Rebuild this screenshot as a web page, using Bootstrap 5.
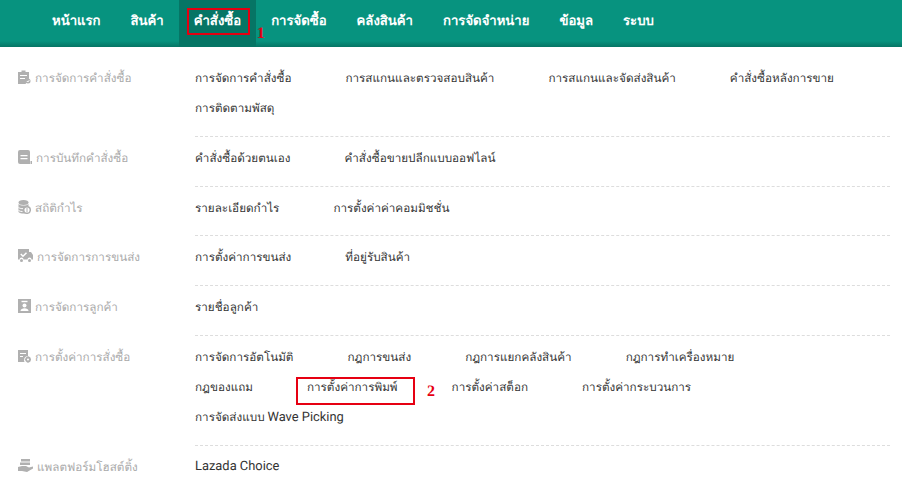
<!DOCTYPE html>
<html lang="th"><head><meta charset="utf-8"><title>คำสั่งซื้อ</title>
<link href="https://cdn.jsdelivr.net/npm/bootstrap@5.3.0/dist/css/bootstrap.min.css" rel="stylesheet">
<style>
html,body{height:496px;overflow:hidden;background:#fff}
body{font-family:Roboto,"Noto Sans",sans-serif;font-size:11.7px;color:#333;text-rendering:geometricPrecision}
.topbar{height:47px;padding-left:37px;background:linear-gradient(#07937f 0,#07937f 41px,#067565 47px)}
.topitem{display:flex;align-items:center;height:47px;padding:0 15px;padding-bottom:3px;color:#fff;font-weight:700;font-size:13.15px;text-decoration:none;position:relative}
.topitem.on{background:#067565}
.markbox{position:absolute;border:2px solid #e60012;pointer-events:none}
.marknum{position:absolute;color:#e60012;font:700 16px "Liberation Serif",serif;line-height:1}
.box1{left:8px;top:8px;width:63px;height:27px}
.num1{left:78px;top:26px}
.menuwrap{padding-top:15.8px;padding-left:18px;padding-right:12px}
.grp{display:flex}
.grplabel{width:177px;flex:none;display:flex;align-items:flex-start;gap:4px;color:#a9a9a9;font-weight:500;height:30px;padding-top:6px;line-height:18px}
.grplabel svg{flex:none;margin-top:1px}
.grplinks{flex:1;display:flex;flex-wrap:wrap;column-gap:54px;padding-bottom:12.3px;border-bottom:1px dashed #ddd;margin-bottom:6px}
.grp:last-child .grplinks{border-bottom:0}
.sublink{color:#333;text-decoration:none;height:30.4px;line-height:18px;padding-top:6px;white-space:nowrap;position:relative}
.latintext{font-size:12.9px}
.rowbreak{flex-basis:100%;height:0}
.box2{left:-11px;top:5px;width:119px;height:28px}
.num2{left:120px;top:12px}
</style></head><body>
<nav class="d-flex topbar">
<a class="topitem" href="#">หน้าแรก</a><a class="topitem" href="#">สินค้า</a>
<a class="topitem on" href="#">คำสั่งซื้อ<span class="markbox box1"></span><span class="marknum num1">1</span></a>
<a class="topitem" href="#">การจัดซื้อ</a><a class="topitem" href="#">คลังสินค้า</a><a class="topitem" href="#">การจัดจำหน่าย</a><a class="topitem" href="#">ข้อมูล</a><a class="topitem" href="#">ระบบ</a>
</nav>
<main class="menuwrap">
<section class="grp"><div class="grplabel"><svg width="13" height="14" viewBox="0 0 13 14"><path fill="#b0b0b0" d="M0 2h3.500V.5h4V2H11v6.500L7.500 14H0z"/><path fill="#fff" d="M2 5h7v1H2zM2 8h5v1H2z"/><circle cx="10" cy="11" r="2.500" fill="#b0b0b0"/><path fill="none" stroke="#fff" d="M8.800 11l1 1 1.500-1.800"/></svg>การจัดการคำสั่งซื้อ</div>
<div class="grplinks"><a class="sublink" href="#">การจัดการคำสั่งซื้อ</a><a class="sublink" href="#">การสแกนและตรวจสอบสินค้า</a><a class="sublink" href="#">การสแกนและจัดส่งสินค้า</a><a class="sublink" href="#">คำสั่งซื้อหลังการขาย</a><a class="sublink" href="#">การติดตามพัสดุ</a></div></section>
<section class="grp"><div class="grplabel"><svg width="14" height="14" viewBox="0 0 14 14"><path fill="#b0b0b0" d="M0 2a2 2 0 0 1 2-2h8a2 2 0 0 1 2 2v12H2a2 2 0 0 1-2-2z"/><path fill="#fff" d="M2.500 5h7v1.200h-7zM2.500 8h7v1.200h-7z"/><path fill="#b0b0b0" d="M12.500 11H14v3h-1.500z"/></svg>การบันทึกคำสั่งซื้อ</div>
<div class="grplinks"><a class="sublink" href="#">คำสั่งซื้อด้วยตนเอง</a><a class="sublink" href="#">คำสั่งซื้อขายปลีกแบบออฟไลน์</a></div></section>
<section class="grp"><div class="grplabel"><svg width="13" height="14" viewBox="0 0 13 14"><ellipse cx="5.500" cy="2.500" rx="5" ry="2.500" fill="#b0b0b0"/><path fill="#b0b0b0" d="M.5 4c2 2 8 2 10 0v8c-2 2-8 2-10 0z"/><path stroke="#fff" fill="none" d="M.5 7.500c1.500 1 3 1.200 4.500 1.200M.5 10.500c1.500.8 2.500 1 4 1"/><circle cx="9" cy="10" r="3.300" fill="#fff" stroke="#b0b0b0" stroke-width="1.500"/><path stroke="#b0b0b0" d="M9 8v4"/></svg>สถิติกำไร</div>
<div class="grplinks"><a class="sublink" href="#">รายละเอียดกำไร</a><a class="sublink" href="#">การตั้งค่าค่าคอมมิชชั่น</a></div></section>
<section class="grp"><div class="grplabel"><svg width="15" height="14" viewBox="0 0 15 14"><path fill="#b0b0b0" d="M0 0h11v3h2l2 3v4.500h-1.500a2 2 0 0 0-4 0h-4a2 2 0 0 0-4 0H0z"/><circle cx="3.500" cy="11.500" r="1.500" fill="#b0b0b0"/><circle cx="11.500" cy="11.500" r="1.500" fill="#b0b0b0"/><path fill="none" stroke="#fff" stroke-width="1.500" d="M2.800 5l2.200 2.200 3.500-3.500"/></svg>การจัดการการขนส่ง</div>
<div class="grplinks"><a class="sublink" href="#">การตั้งค่าการขนส่ง</a><a class="sublink" href="#">ที่อยู่รับสินค้า</a></div></section>
<section class="grp"><div class="grplabel"><svg width="13" height="14" viewBox="0 0 13 14"><path fill="#b0b0b0" d="M0 0h13v14H0z"/><path fill="#fff" d="M3.500 1.800h6v1.400h-6z"/><circle cx="6.500" cy="6.500" r="2" fill="#fff"/><path fill="#fff" d="M2.500 12c0-3.800 8-3.800 8 0z"/></svg>การจัดการลูกค้า</div>
<div class="grplinks"><a class="sublink" href="#">รายชื่อลูกค้า</a></div></section>
<section class="grp"><div class="grplabel"><svg width="13" height="14" viewBox="0 0 13 14"><path fill="#b0b0b0" d="M0 1h10v6a4 4 0 0 0-3.500 6H0z"/><path fill="#fff" d="M2 4h6v1H2zM2 7h3v1H2z"/><circle cx="10" cy="10.500" r="2" fill="none" stroke="#b0b0b0" stroke-width="1.800"/><path stroke="#b0b0b0" d="M10 7.300v1M10 12.700v1M6.800 10.500h1M12.200 10.500h1"/></svg>การตั้งค่าการสั่งซื้อ</div>
<div class="grplinks"><a class="sublink" href="#">การจัดการอัตโนมัติ</a><a class="sublink" href="#">กฎการขนส่ง</a><a class="sublink" href="#">กฎการแยกคลังสินค้า</a><a class="sublink" href="#">กฎการทำเครื่องหมาย</a><span class="rowbreak"></span><a class="sublink" href="#">กฎของแถม</a><a class="sublink" href="#">การตั้งค่าการพิมพ์<span class="markbox box2"></span><span class="marknum num2">2</span></a><a class="sublink" href="#">การตั้งค่าสต็อก</a><a class="sublink" href="#">การตั้งค่ากระบวนการ</a><span class="rowbreak"></span><a class="sublink" href="#">การจัดส่งแบบ <span class="latintext">Wave Picking</span></a></div></section>
<section class="grp"><div class="grplabel"><svg width="15" height="14" viewBox="0 0 15 14"><path fill="#b0b0b0" d="M3 0h9v2.500H3zM2 3.500h10V6H2zM0 8l4-1h4l3 1.500 4-1v2L9 13 4 12H0z"/></svg>แพลตฟอร์มโฮสต์ติ้ง</div>
<div class="grplinks"><a class="sublink latintext" href="#">Lazada Choice</a></div></section>
</main>
</body></html>
